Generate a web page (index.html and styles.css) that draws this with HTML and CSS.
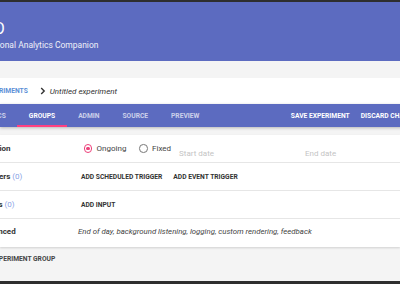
FILE: index.html
```html
<!DOCTYPE html>
<html lang="en">
<head>
    <meta charset="UTF-8">
    <meta name="viewport" content="width=device-width, initial-scale=1.0">
    <title>PACO</title>
    <link rel="stylesheet" href="styles.css">
</head>
<body>

    <div class="topline"></div>

    <div class="header">
        <div class="title">PACO</div>
        <div class="subtitle">Operational Analytics Companion</div>
    </div>

    <div class="band"></div>

    <div class="crumbs">
        <span class="crumb-link">EXPERIMENTS</span>
        <svg class="chevron" width="6" height="8" viewBox="0 0 6 8">
            <path d="M1.2 1 L4.2 4 L1.2 7" fill="none" stroke="#333" stroke-width="1.4"/>
        </svg>
        <span class="crumb-current">Untitled experiment</span>
    </div>

    <div class="tabs">
        <span class="tab first">BASICS</span>
        <span class="tab active">GROUPS</span>
        <span class="tab">ADMIN</span>
        <span class="tab">SOURCE</span>
        <span class="tab">PREVIEW</span>
        <span class="action save">SAVE EXPERIMENT</span>
        <span class="action">DISCARD CHANGES</span>
    </div>

    <div class="content">
        <div class="card">
            <div class="row">
                <div class="label">Duration</div>
                <div class="controls">
                    <span class="radio on"></span><span class="radio-text">Ongoing</span>
                    <span class="radio"></span><span class="radio-text">Fixed</span>
                    <span class="date start">Start date</span>
                    <span class="date end">End date</span>
                </div>
            </div>
            <div class="row">
                <div class="label">Triggers <span class="count">(0)</span></div>
                <div class="controls">
                    <span class="flat-btn">ADD SCHEDULED TRIGGER</span>
                    <span class="flat-btn">ADD EVENT TRIGGER</span>
                </div>
            </div>
            <div class="row">
                <div class="label">Inputs <span class="count">(0)</span></div>
                <div class="controls">
                    <span class="flat-btn">ADD INPUT</span>
                </div>
            </div>
            <div class="row last">
                <div class="label">Advanced</div>
                <div class="controls">
                    <span class="summary">End of day, background listening, logging, custom rendering, feedback</span>
                </div>
            </div>
        </div>
        <div class="add-group">ADD EXPERIMENT GROUP</div>
    </div>

    <div class="bottomline"></div>

</body>
</html>
```

FILE: styles.css
```css
body {
    font-family: Roboto, "Noto Sans", sans-serif;
    background-color: #f4f4f4;
    margin: 0;
    padding: 0;
    width: 400px;
    height: 284px;
    overflow: hidden;
    display: flex;
    flex-direction: column;
}

.topline {
    height: 2px;
    background-color: #2e2e2e;
    flex-shrink: 0;
}

.header {
    height: 59px;
    background-color: #5c6bc0;
    color: white;
    box-sizing: border-box;
    padding-top: 17px;
    flex-shrink: 0;
}

.title {
    font-size: 16px;
    line-height: 20px;
    margin-left: -36px;
}

.subtitle {
    font-size: 8.5px;
    line-height: 12px;
    margin-left: -27.5px;
    opacity: 0.9;
}

.band {
    height: 17px;
    flex-shrink: 0;
}

.crumbs {
    height: 26px;
    background-color: white;
    display: flex;
    align-items: center;
    flex-shrink: 0;
    white-space: nowrap;
}

.crumb-link {
    color: #5c8fd6;
    font-weight: bold;
    font-size: 6.7px;
    margin-left: -17px;
    margin-right: 12px;
}

.chevron {
    margin-right: 4px;
}

.crumb-current {
    font-style: italic;
    color: #333;
    font-size: 8px;
}

.tabs {
    height: 23px;
    width: 440px;
    background-color: #5c6bc0;
    display: flex;
    align-items: center;
    flex-shrink: 0;
    font-size: 6.7px;
    font-weight: bold;
    color: rgba(255, 255, 255, 0.7);
    white-space: nowrap;
    box-shadow: 0px 1px 3px rgba(0, 0, 0, 0.25);
}

.tab {
    height: 100%;
    display: flex;
    align-items: center;
    padding: 0 11.5px;
    box-sizing: border-box;
}

.tab.first {
    margin-left: -29px;
}

.tab.active {
    color: white;
    border-bottom: 2px solid #ff4081;
    padding-top: 2px;
}

.action {
    color: white;
    margin-left: 11px;
}

.action.save {
    margin-left: 80px;
}

.content {
    flex: 1;
    padding-top: 8px;
}

.card {
    background-color: white;
    box-shadow: 0px 1px 2px rgba(0, 0, 0, 0.15);
}

.row {
    display: flex;
    align-items: center;
    height: 27px;
    border-bottom: 1px solid #e6e6e6;
    white-space: nowrap;
}

.row.last {
    border-bottom: 1px solid transparent;
    padding-bottom: 3px;
    height: 24px;
}

.label {
    width: 98px;
    margin-left: -20px;
    font-size: 8px;
    font-weight: bold;
    color: #333;
    flex-shrink: 0;
}

.count {
    color: #8aa3e6;
    font-weight: normal;
}

.controls {
    display: flex;
    align-items: center;
}

.radio {
    width: 6.6px;
    height: 6.6px;
    border: 1.2px solid #777;
    border-radius: 50%;
    margin-right: 4.5px;
    position: relative;
}

.radio.on {
    margin-left: 5.5px;
    border-color: #ec407a;
}

.radio.on::after {
    content: "";
    position: absolute;
    left: 1.5px;
    top: 1.5px;
    width: 3.6px;
    height: 3.6px;
    border-radius: 50%;
    background-color: #ec407a;
}

.radio-text {
    font-size: 8px;
    color: #444;
    margin-right: 12.5px;
}

.date {
    font-size: 8px;
    color: #c4c4c4;
    padding-top: 10px;
}

.date.start {
    width: 126px;
    margin-left: -4.5px;
}

.flat-btn {
    font-size: 6.7px;
    font-weight: bold;
    color: #333;
    margin-left: 3px;
    margin-right: 8px;
}

.summary {
    font-size: 7.8px;
    font-style: italic;
    color: #444;
}

.add-group {
    font-size: 6.7px;
    font-weight: bold;
    color: #444;
    margin-left: -24px;
    margin-top: 8px;
}

.bottomline {
    height: 3px;
    background-color: #2e2e2e;
    flex-shrink: 0;
}
```
